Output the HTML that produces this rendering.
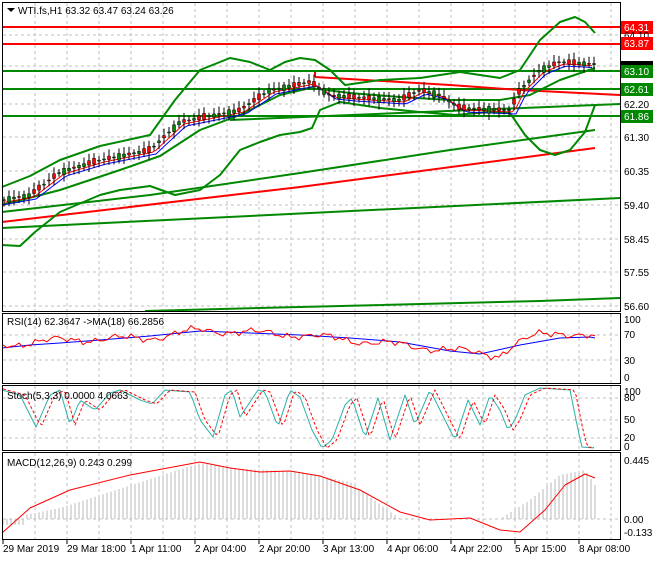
<!DOCTYPE html><html><head><style>
body{margin:0;background:#fff;width:660px;height:560px;overflow:hidden;font-family:"Liberation Sans",sans-serif}
svg text{font-family:"Liberation Sans",sans-serif;font-size:10px;fill:#000}
</style></head><body>
<svg id="s" width="660" height="560" xmlns="http://www.w3.org/2000/svg">
<rect width="660" height="560" fill="#fff"/>
<g id="grid" stroke="#c0c0c0" stroke-dasharray="3,3" stroke-width="1"></g>
<g fill="none" stroke-linejoin="round">
<line x1="2" y1="27" x2="620" y2="27" stroke="#f00" stroke-width="2"/>
<line x1="2" y1="44" x2="620" y2="44" stroke="#f00" stroke-width="2"/>
<line x1="2" y1="71" x2="620" y2="71" stroke="#080" stroke-width="2"/>
<line x1="2" y1="89" x2="620" y2="89" stroke="#080" stroke-width="2"/>
<line x1="2" y1="116" x2="620" y2="116" stroke="#080" stroke-width="2"/>
<polyline points="2,228 620,198" stroke="#080" stroke-width="2"/>
<polyline points="145,311 300,307 540,301 620,298" stroke="#080" stroke-width="2"/>
<polyline points="2,222 300,187 595,148" stroke="#f00" stroke-width="2"/>
<polyline points="2,212 150,195 300,173 450,150 595,130" stroke="#080" stroke-width="2"/>
<polyline points="230,120 620,104" stroke="#080" stroke-width="2"/>
<polyline points="315,77 450,85 520,90 620,95" stroke="#f00" stroke-width="2"/>
<polyline points="315,77 315,72" stroke="#f00" stroke-width="2"/>
<polyline points="2,187 30,176 60,160 100,146 150,135 175,100 200,70 230,58 250,62 270,70 285,62 300,58 315,60 330,70 345,85 380,80 420,78 460,72 500,78 520,70 540,40 560,22 575,17 585,22 595,33" stroke="#080" stroke-width="2"/>
<polyline points="2,245 20,246 35,232 60,212 100,195 120,190 150,186 175,195 200,190 220,175 240,150 260,142 280,135 300,132 312,128 320,110 340,102 380,108 420,112 455,115 490,112 510,113 525,135 540,150 555,155 570,150 585,132 595,105" stroke="#080" stroke-width="2"/>
<polyline points="2,205 60,190 120,170 160,156 200,130 240,115 280,95 310,88 350,93 400,97 450,100 500,100 530,95 560,80 595,68" stroke="#080" stroke-width="2"/>
<polyline id="ma1" stroke="#00f" stroke-width="1"/>
<polyline id="ma2" stroke="#f00" stroke-width="1"/>
<g id="cnd"></g>
<polyline points="2,348 30,345 60,343 100,340 150,336 200,331 250,333 300,335 350,338 400,342 450,351 480,354 520,345 560,338 590,337 595,338" stroke="#00f" stroke-width="1"/>
<polyline id="rsi" stroke="#f00" stroke-width="1"/>
<polyline id="st1" stroke="#2ab0a8" stroke-width="1"/>
<polyline id="st2" stroke="#f00" stroke-width="1" stroke-dasharray="3,2"/>
<g id="hist" stroke="#b8b8b8" stroke-width="1"></g>
<polyline points="2,533 30,508 70,490 130,475 200,462 230,468 260,472 290,471 320,476 360,490 400,512 430,520 470,518 500,530 520,532 545,510 565,485 585,474 595,478" stroke="#f00" stroke-width="1"/>
</g>
<g fill="none" stroke="#000" stroke-width="1">
<rect x="2.5" y="2.5" width="618" height="309"/>
<rect x="2.5" y="313.5" width="618" height="70"/>
<rect x="2.5" y="385.5" width="618" height="65"/>
<rect x="2.5" y="452.5" width="618" height="87"/>
</g>
<g id="ticks" stroke="#000"></g>
<g>
<rect x="621" y="21" width="32" height="13" fill="#f00"/><text x="624" y="31" style="fill:#fff">64.31</text>
<text x="624" y="39">64.10</text>
<rect x="621" y="37" width="32" height="13" fill="#f00"/><text x="624" y="47" style="fill:#fff">63.87</text>
<rect x="621" y="61" width="32" height="7" fill="#000"/>
<rect x="621" y="65" width="32" height="13" fill="#080"/><text x="624" y="75" style="fill:#fff">63.10</text>
<rect x="621" y="83" width="32" height="13" fill="#080"/><text x="624" y="93" style="fill:#fff">62.61</text>
<text x="624" y="108">62.20</text>
<rect x="621" y="110" width="32" height="13" fill="#080"/><text x="624" y="120" style="fill:#fff">61.86</text>
<text x="624" y="141">61.30</text>
<text x="624" y="175">60.35</text>
<text x="624" y="209">59.40</text>
<text x="624" y="243">58.45</text>
<text x="624" y="276">57.55</text>
<text x="624" y="310">56.60</text>
<text x="624" y="323">100</text><text x="624" y="338">70</text><text x="624" y="364">30</text><text x="624" y="381">0</text>
<text x="624" y="395">100</text><text x="624" y="401">80</text><text x="624" y="423">50</text><text x="624" y="441">20</text><text x="624" y="450">0</text>
<text x="624" y="464">0.445</text><text x="624" y="523">0.00</text><text x="624" y="536">-0.133</text>
</g>
<g>
<path d="M7,8 h8 l-4,4 z" fill="#000"/>
<text x="18" y="14">WTI.fs,H1  63.32 63.47 63.24 63.26</text>
<text x="7" y="325">RSI(14) 62.3647  -&gt;MA(18) 66.2856</text>
<text x="7" y="399">Stoch(5,3,3) 0.0000 4.0663</text>
<text x="7" y="466">MACD(12,26,9) 0.243 0.299</text>
</g>
<g>
<text x="3" y="552">29 Mar 2019</text><text x="67" y="552">29 Mar 18:00</text><text x="131" y="552">1 Apr 11:00</text>
<text x="195" y="552">2 Apr 04:00</text><text x="259" y="552">2 Apr 20:00</text><text x="323" y="552">3 Apr 13:00</text>
<text x="387" y="552">4 Apr 06:00</text><text x="451" y="552">4 Apr 22:00</text><text x="515" y="552">5 Apr 15:00</text>
<text x="579" y="552">8 Apr 08:00</text>
</g>
</svg>
<script>
var NS="http://www.w3.org/2000/svg";
function el(p,t,a){var e=document.createElementNS(NS,t);for(var k in a)e.setAttribute(k,a[k]);p.appendChild(e);return e}
var g=document.getElementById('grid');
for(var x=35;x<620;x+=32){[[3,311],[314,383],[386,450],[453,539]].forEach(function(r){el(g,'line',{x1:x,y1:r[0],x2:x,y2:r[1]})})}
[35,66,104,137,171,205,239,272,306,335,360,398,420,438,519].forEach(function(y){el(g,'line',{x1:3,y1:y,x2:620,y2:y})});
var t=document.getElementById('ticks');
for(var x=3;x<620;x+=64)el(t,'line',{x1:x,y1:540,x2:x,y2:544});
function interp(pts,x){for(var i=1;i<pts.length;i++){if(x<=pts[i][0]){var a=pts[i-1],b=pts[i];return a[1]+(b[1]-a[1])*(x-a[0])/(b[0]-a[0])}}return pts[pts.length-1][1]}
var price=[[2,200],[30,195],[60,172],[100,160],[150,150],[180,122],[240,110],[270,90],[310,82],[330,95],[350,97],[400,100],[420,90],[440,95],[460,108],[510,110],[520,90],[540,70],[560,62],[595,64]];
var c=document.getElementById('cnd'),m1=[],m2=[];
for(var x=4,i=0;x<596;x+=5,i++){var y=interp(price,x),n=Math.sin(i*1.7)*4+Math.sin(i*0.6)*3;var o=y+n*0.6,cl=y-n*0.4;var hi=Math.min(o,cl)-3-Math.abs(Math.sin(i*2.3))*4,lo=Math.max(o,cl)+3+Math.abs(Math.cos(i*1.3))*4;
el(c,'line',{x1:x,y1:hi,x2:x,y2:lo,stroke:'#000'});el(c,'rect',{x:x-1.5,y:Math.min(o,cl),width:3,height:Math.max(1,Math.abs(o-cl)),fill:(cl<o?'#080':'#f00'),stroke:'#000','stroke-width':0.5});}
for(var x=4;x<596;x+=4){m1.push(x+','+(interp(price,x-6)+4));m2.push(x+','+(interp(price,x-4)+2));}
document.getElementById('ma1').setAttribute('points',m1.join(' '));
document.getElementById('ma2').setAttribute('points',m2.join(' '));
var stk=[[2,390],[20,395],[36,427],[50,395],[60,390],[70,425],[80,400],[95,410],[110,393],[120,390],[140,400],[152,404],[165,390],[190,392],[200,420],[213,437],[225,395],[232,390],[240,417],[258,390],[265,392],[278,427],[290,390],[300,397],[312,430],[322,448],[332,440],[345,405],[352,398],[365,438],[378,398],[390,440],[405,395],[415,425],[430,390],[440,410],[455,440],[468,400],[480,425],[490,395],[500,410],[508,430],[515,420],[525,395],[540,388],[570,390],[578,430],[582,447],[595,448]];
var r=[],s1=[],s2=[],h=document.getElementById('hist');
var macd=[[2,520],[10,518],[60,508],[200,463],[230,468],[300,472],[350,482],[400,519],[450,519],[500,519],[530,500],[560,475],[585,470],[595,485]];
for(var x=3,i=0;x<596;x+=4,i++){
r.push(x+','+(interp([[2,345],[60,340],[150,338],[200,330],[300,335],[400,345],[450,350],[500,355],[515,345],[540,334],[560,332],[595,338]],x)+(Math.sin(i*1.3)*2+Math.sin(i*0.37)*2.5+Math.sin(i*2.9)*1.5)));
var hy=interp(macd,x);if(x<25)hy=525;el(h,'line',{x1:x,y1:519,x2:x,y2:hy});}
for(var x=3;x<596;x+=3){var v=interp(stk,x);s1.push(x+','+v);s2.push(x+','+interp(stk,x-5));}
document.getElementById('rsi').setAttribute('points',r.join(' '));
document.getElementById('st1').setAttribute('points',s1.join(' '));
document.getElementById('st2').setAttribute('points',s2.join(' '));
</script>
</body></html>
